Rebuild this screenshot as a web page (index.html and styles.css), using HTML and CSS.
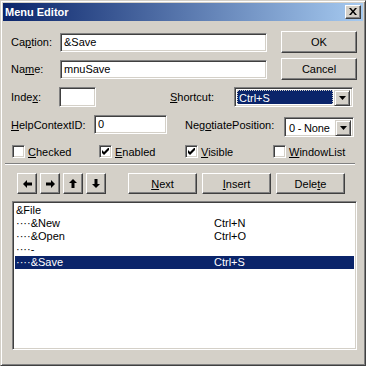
FILE: index.html
```html
<!DOCTYPE html>
<html lang="en">
<head>
    <meta charset="UTF-8">
    <title>Menu Editor</title>
    <link rel="stylesheet" href="styles.css">
</head>
<body>
    <div class="window">
        <div class="titlebar">
            <span class="title">Menu Editor</span>
            <div class="close">
                <svg width="8" height="7" viewBox="0 0 8 7"><path d="M0 0h2l2 2.5L6 0h2L5 3.5 8 7H6L4 4.5 2 7H0l3-3.5z" fill="#000"/></svg>
            </div>
        </div>

        <div class="client">
            <div class="row row-top">
                <span class="lbl w-caption">Ca<u>p</u>tion:</span>
                <div class="field w-text">&amp;Save</div>
                <div class="btn btn-side">OK</div>
            </div>

            <div class="row row-top row-second">
                <span class="lbl w-caption">Na<u>m</u>e:</span>
                <div class="field w-text">mnuSave</div>
                <div class="btn btn-side">Cancel</div>
            </div>

            <div class="row row-index">
                <span class="lbl w-index">Inde<u>x</u>:</span>
                <div class="field w-indexbox"></div>
                <span class="lbl w-shortcut"><u>S</u>hortcut:</span>
                <div class="combo w-shortcutbox">
                    <div class="combo-text"><span class="combo-sel">Ctrl+S</span></div>
                    <div class="combo-btn"><svg width="7" height="4" viewBox="0 0 7 4"><path d="M0 0h7L3.5 4z" fill="#000"/></svg></div>
                </div>
            </div>

            <div class="row row-help">
                <span class="lbl w-help"><u>H</u>elpContextID:</span>
                <div class="field w-helpbox">0</div>
                <span class="lbl w-negotiate">Neg<u>o</u>tiatePosition:</span>
                <div class="combo w-negbox">
                    <div class="combo-text">0 - None</div>
                    <div class="combo-btn"><svg width="7" height="4" viewBox="0 0 7 4"><path d="M0 0h7L3.5 4z" fill="#000"/></svg></div>
                </div>
            </div>

            <div class="row row-checks">
                <div class="check w-chk1"><span class="box"></span><span><u>C</u>hecked</span></div>
                <div class="check w-chk2"><span class="box"><svg width="7" height="7" viewBox="0 0 7 7"><path d="M0 2v3l2 2 5-5V-1L2 4z" fill="#000"/></svg></span><span><u>E</u>nabled</span></div>
                <div class="check w-chk3"><span class="box"><svg width="7" height="7" viewBox="0 0 7 7"><path d="M0 2v3l2 2 5-5V-1L2 4z" fill="#000"/></svg></span><span><u>V</u>isible</span></div>
                <div class="check"><span class="box"></span><span><u>W</u>indowList</span></div>
            </div>

            <div class="separator"></div>

            <div class="row row-buttons">
                <div class="arrows">
                    <div class="btn btn-arrow"><svg width="9" height="8" viewBox="0 0 9 8"><path d="M0 4L4 0v2.5h5v3H4V8z" fill="#000"/></svg></div>
                    <div class="btn btn-arrow"><svg width="9" height="8" viewBox="0 0 9 8"><path d="M9 4L5 0v2.5H0v3h5V8z" fill="#000"/></svg></div>
                    <div class="btn btn-arrow"><svg width="8" height="9" viewBox="0 0 8 9"><path d="M4 0L8 4H5.5v5h-3V4H0z" fill="#000"/></svg></div>
                    <div class="btn btn-arrow"><svg width="8" height="9" viewBox="0 0 8 9"><path d="M4 9L8 5H5.5V0h-3v5H0z" fill="#000"/></svg></div>
                </div>
                <div class="btn btn-action"><u>N</u>ext</div>
                <div class="btn btn-action"><u>I</u>nsert</div>
                <div class="btn btn-action">Dele<u>t</u>e</div>
            </div>

            <div class="listbox">
                <div class="item"><span class="item-name">&amp;File</span></div>
                <div class="item"><span class="item-name">····&amp;New</span><span>Ctrl+N</span></div>
                <div class="item"><span class="item-name">····&amp;Open</span><span>Ctrl+O</span></div>
                <div class="item"><span class="item-name">····-</span></div>
                <div class="item selected"><span class="item-name">····&amp;Save</span><span>Ctrl+S</span></div>
            </div>
        </div>
    </div>
</body>
</html>
```

FILE: styles.css
```css
body {
    margin: 0;
    font-family: "Liberation Sans", Arial, sans-serif;
    font-size: 11px;
    color: #000;
}

.window {
    width: 366px;
    height: 366px;
    box-sizing: border-box;
    background-color: #d4d0c8;
    border: 1px solid;
    border-color: #d4d0c8 #404040 #404040 #d4d0c8;
    box-shadow: inset 1px 1px #fff, inset -1px -1px #808080;
    padding: 2px;
}

.titlebar {
    height: 18px;
    display: flex;
    align-items: center;
    justify-content: space-between;
    background: linear-gradient(to right, #0a246a, #a6caf0);
    padding: 0 2px;
}

.title {
    color: #fff;
    font-weight: bold;
    font-size: 11px;
}

.close {
    width: 16px;
    height: 14px;
    box-sizing: border-box;
    background-color: #d4d0c8;
    border: 1px solid;
    border-color: #fff #404040 #404040 #fff;
    box-shadow: inset -1px -1px #808080;
    display: flex;
    align-items: center;
    justify-content: center;
    padding: 0 1px 1px 0;
}

.client {
    padding: 10px 0 0 8px;
}

.row {
    display: flex;
    align-items: center;
}

.lbl {
    flex: none;
    white-space: nowrap;
}

.field {
    box-sizing: border-box;
    height: 19px;
    background-color: #fff;
    border: 1px solid;
    border-color: #808080 #fff #fff #808080;
    box-shadow: inset 1px 1px #404040, inset -1px -1px #d4d0c8;
    padding: 0 3px;
    line-height: 17px;
    flex: none;
}

.btn {
    box-sizing: border-box;
    background-color: #d4d0c8;
    border: 1px solid;
    border-color: #fff #404040 #404040 #fff;
    box-shadow: inset -1px -1px #808080;
    display: flex;
    align-items: center;
    justify-content: center;
    flex: none;
}

/* caption / name rows */
.row-top {
    height: 22px;
}

.row-second {
    margin-top: 5px;
}

.w-caption {
    width: 49px;
}

.w-text {
    width: 207px;
}

.btn-side {
    width: 76px;
    height: 22px;
    margin-left: 14px;
}

/* index / shortcut */
.row-index {
    margin-top: 7px;
    height: 20px;
}

.w-index {
    width: 48px;
}

.w-indexbox {
    width: 37px;
    height: 20px;
}

.w-shortcut {
    width: 64px;
    margin-left: 74px;
}

.combo {
    box-sizing: border-box;
    height: 20px;
    background-color: #fff;
    border: 1px solid;
    border-color: #808080 #fff #fff #808080;
    box-shadow: inset 1px 1px #404040, inset -1px -1px #d4d0c8;
    padding: 2px;
    display: flex;
    flex: none;
}

.combo-text {
    flex: 1;
    line-height: 16px;
    padding-left: 3px;
    white-space: nowrap;
    overflow: hidden;
}

.combo-btn {
    width: 16px;
    height: 16px;
    box-sizing: border-box;
    background-color: #d4d0c8;
    border: 1px solid;
    border-color: #d4d0c8 #404040 #404040 #d4d0c8;
    box-shadow: inset 1px 1px #fff, inset -1px -1px #808080;
    display: flex;
    align-items: center;
    justify-content: center;
    flex: none;
}

.w-shortcutbox {
    width: 119px;
}

.w-shortcutbox .combo-text {
    padding: 0;
    margin-right: 1px;
}

.combo-sel {
    display: block;
    height: 16px;
    box-sizing: border-box;
    background-color: #0a246a;
    color: #fff;
    border: 1px dotted #d4d0c8;
    line-height: 14px;
    padding-left: 1px;
}

/* help / negotiate */
.row-help {
    margin-top: 8px;
    align-items: flex-start;
    height: 22px;
}

.row-help .lbl {
    line-height: 21px;
}

.w-help {
    width: 83px;
}

.w-helpbox {
    width: 73px;
}

.w-negotiate {
    width: 99px;
    margin-left: 18px;
}

.w-negbox {
    width: 70px;
    margin-top: 2px;
}

.w-negbox .combo-text {
    padding-left: 2px;
    letter-spacing: -0.2px;
}

/* checkboxes */
.row-checks {
    margin-top: 8px;
    margin-left: 1px;
    height: 13px;
}

.check {
    display: flex;
    align-items: center;
    gap: 3px;
    flex: none;
}

.w-chk1 {
    width: 87px;
}

.w-chk2 {
    width: 86px;
}

.w-chk3 {
    width: 88px;
}

.box {
    width: 13px;
    height: 13px;
    box-sizing: border-box;
    background-color: #fff;
    border: 1px solid;
    border-color: #808080 #fff #fff #808080;
    box-shadow: inset 1px 1px #404040, inset -1px -1px #d4d0c8;
    display: flex;
    align-items: center;
    justify-content: center;
}

.separator {
    width: 350px;
    margin: 5px 0 0 -6px;
    border-top: 1px solid #808080;
    border-bottom: 1px solid #fff;
}

/* arrows + actions */
.row-buttons {
    margin-top: 8px;
    height: 21px;
}

.arrows {
    display: flex;
    gap: 3px;
    margin-left: 6px;
    width: 106px;
}

.btn-arrow {
    width: 20px;
    height: 21px;
}

.btn-action {
    width: 69px;
    height: 21px;
    margin-left: 5px;
}

.listbox {
    width: 345px;
    height: 149px;
    box-sizing: border-box;
    margin: 7px 0 0 1px;
    background-color: #fff;
    border: 1px solid;
    border-color: #808080 #fff #fff #808080;
    box-shadow: inset 1px 1px #404040, inset -1px -1px #d4d0c8;
    padding: 2px 2px 0 2px;
}

.item {
    display: flex;
    height: 13px;
    line-height: 13px;
    padding-left: 1px;
    white-space: nowrap;
}

.item-name {
    width: 198px;
}

.item.selected {
    background-color: #0a246a;
    color: #fff;
}
```
